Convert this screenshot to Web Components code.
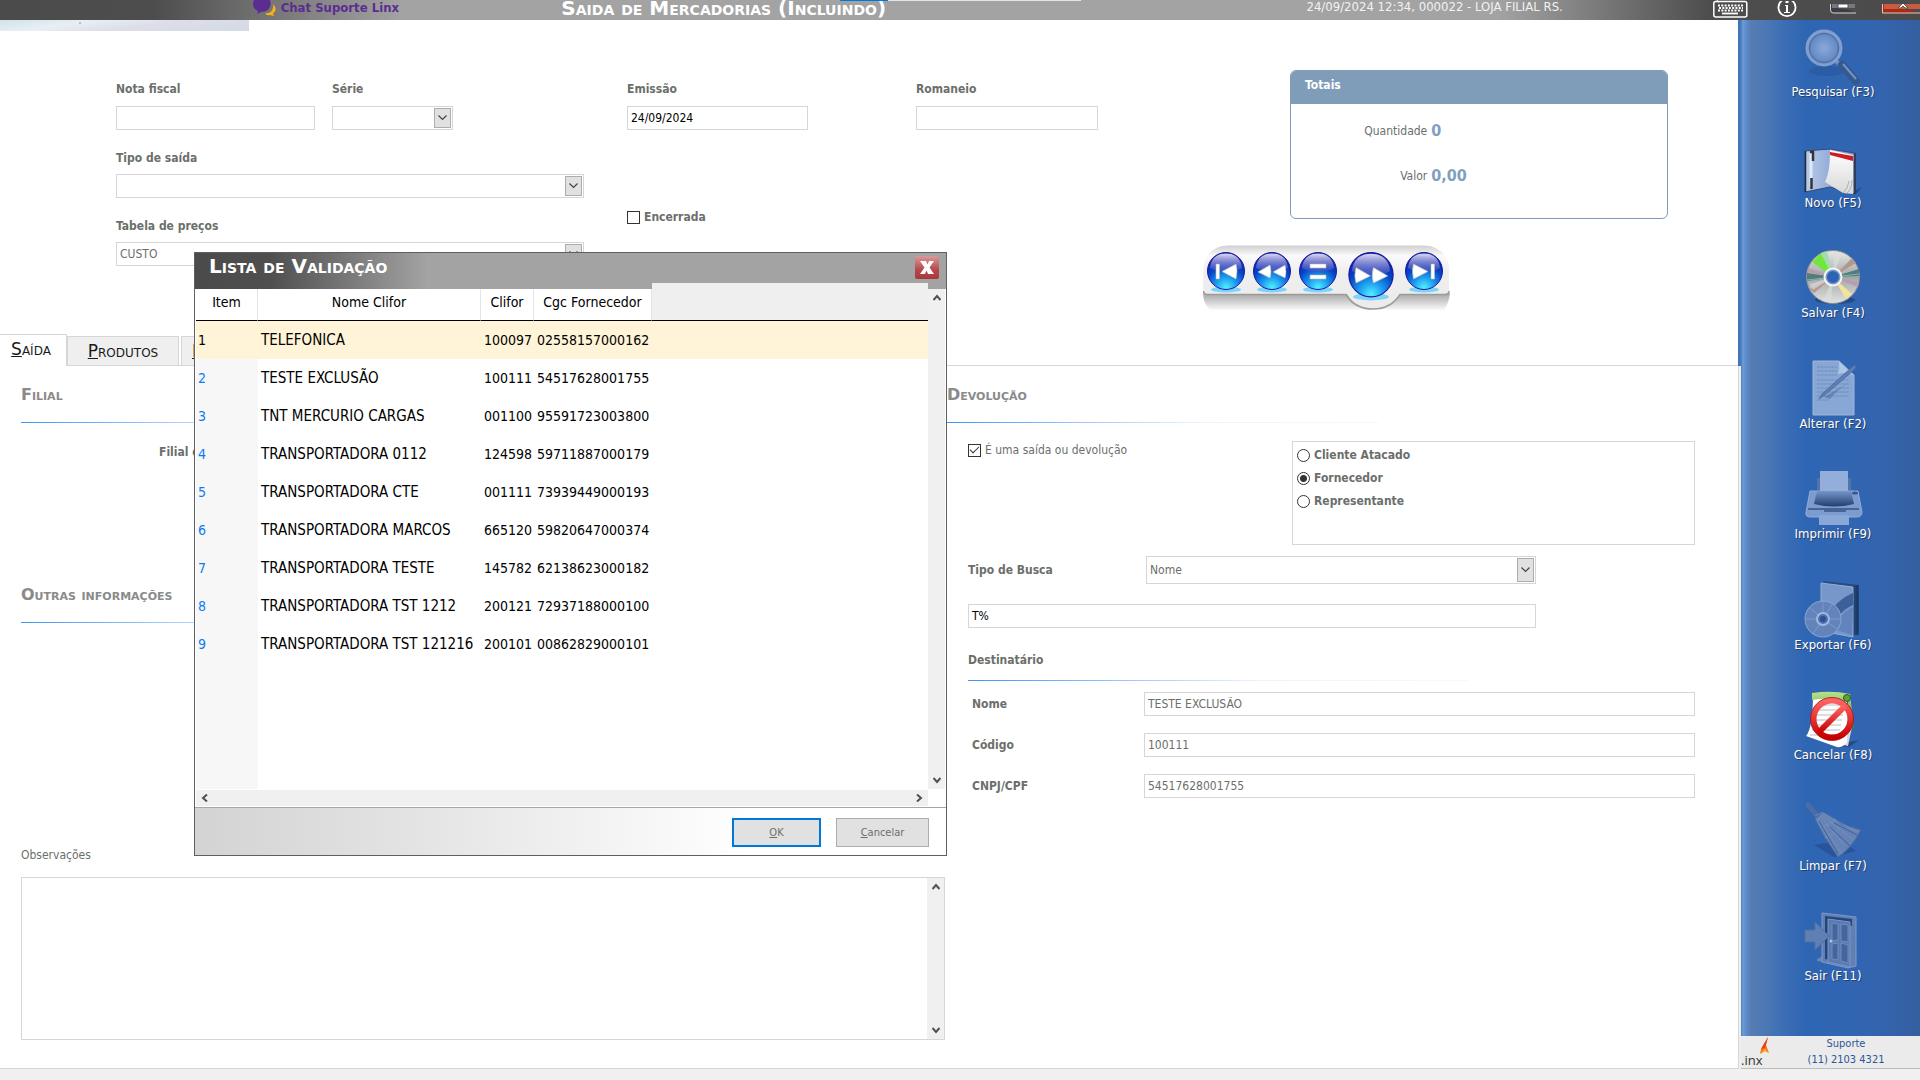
<!DOCTYPE html>
<html lang="pt-BR">
<head>
<meta charset="utf-8">
<title>Saida de Mercadorias</title>
<style>
  html, body { margin: 0; min-height: 100vh; background: #fff; }
  body {
    --ui: "DejaVu Sans Condensed", "DejaVu Sans", sans-serif;
    --display: "DejaVu Sans", sans-serif;
    --label: #6b6f6b;
    --line: #d6d6d6;
    font: 12px/18px var(--ui);
    color: var(--label);
  }
</style>
</head>
<body>
<saida-app></saida-app>

<script>
const base = `*{box-sizing:border-box} :host{display:block} button,input,select,textarea{font:inherit;color:inherit;margin:0}
button{padding:0;border:0;background:none}`;
function define(name, css, html) {
  customElements.define(name, class extends HTMLElement {
    constructor() {
      super();
      const t = document.createElement('template');
      t.innerHTML = `<style>${base}${css}</style>${typeof html === 'function' ? html(this) : html}`;
      this.attachShadow({ mode: 'open' }).append(t.content.cloneNode(true));
    }
  });
}
const attr = (el, n, d = '') => el.getAttribute(n) ?? d;

/* Title bar */
define('title-bar', `
  :host{height:20px;overflow:hidden;position:relative;color:#fff;
    background:linear-gradient(90deg,#4b4b4b 0,#4d4d4d 8%,#a3a3a3 21%,#a3a3a3 78%,#4d4d4d 89%,#4b4b4b)}
  .bar{display:grid;grid-template-columns:253fr 309fr 746fr 407fr 205fr;height:20px;align-items:start}
  .chat{grid-column:2;display:flex;gap:5px;color:#5c2d91;font-weight:bold;font-size:13px;line-height:16px;text-decoration:none;white-space:nowrap}
  h1{margin:0;font:20px/17px var(--display);font-variant:small-caps;font-weight:bold;white-space:nowrap}
  .info{font-size:13px;line-height:14px;color:#f2f2f2;white-space:nowrap}
  .btns{display:flex;align-items:flex-start}
  .btns button{height:18px} svg{display:block}
  .i{margin-left:29px}.min{margin-left:33px}.x{margin-left:26px}
  .load{position:absolute;top:0;left:43.75%;width:241px;height:1px;background:linear-gradient(90deg,#0078d7 48px,#e6e6e6 48px)}
`, `
  <div class="bar">
    <a class="chat" href="#"><svg width="23" height="17" viewBox="0 0 23 17"><path d="M13 13c5 1 8-4 7-9 4 4 3 8 0 9l1 3-4-1c-3 1-5-1-4-2z" fill="#fbb01a"/><path d="M1 0h16c2 6-1 12-9 12l-4 2 1-3C0 9-1 4 1 0z" fill="#5c2d91"/></svg><span>Chat Suporte Linx</span></a>
    <h1>Saida de Mercadorias (Incluindo)</h1>
    <span class="info">24/09/2024 12:34, 000022 - LOJA FILIAL RS.</span>
    <div class="btns">
      <button aria-label="Teclado"><svg width="35" height="18" viewBox="0 0 35 18" fill="none" stroke="#fff"><path d="M4 0c1 2 0 2 2 2" /><rect x=".8" y="1.500" width="33" height="15.500" rx="2" stroke-width="1.500"/><path d="M5 5.500h25M6 8h24M5 10.500h25" stroke-width="1.800" stroke-dasharray="2 1.300"/><path d="M9 13.500h16" stroke-width="1.800"/></svg></button>
      <button class="i" aria-label="Informações"><svg width="20" height="17" viewBox="0 0 20 17"><circle cx="10" cy="6.500" r="8.600" fill="none" stroke="#fff" stroke-width="1.800"/><path d="M8 4h3v7h2v1H7v-1h2V5H8zM8.500 0h3v2h-3z" fill="#fff"/></svg></button>
      <button class="min" aria-label="Minimizar"><svg width="26" height="10" viewBox="0 0 26 10"><path d="M.5 0v6q0 3 3 3H26" fill="#3c3c46" stroke="#d5d5d5"/><path d="M2 0h23v4H2z" fill="#77777f"/><path d="M8 0h10v4H8z" fill="#fff" stroke="#555"/></svg></button>
      <button class="x" aria-label="Fechar"><svg width="38" height="10" viewBox="0 0 38 10"><path d="M.5 0v9H38" fill="#a82a10" stroke="#e6c5bd"/><path d="M2 0h36v5H2z" fill="#c95a43"/><path d="m16 4 5-5 5 5h-3l-2-2-2 2z" fill="#fff" stroke="#555"/></svg></button>
    </div>
  </div>
  <span class="load"></span>
`);

/* Text field with the label above or at the left */
const fieldCss = `
  :host([side]){display:grid;grid-template-columns:var(--side,172fr 551fr);align-items:center}
  label{display:block;font-weight:bold;line-height:18px;margin-bottom:var(--gap,8px);white-space:nowrap}
  :host([side]) label{margin:0}
  input,select{width:100%;height:24px;border:1px solid var(--line);border-radius:0;background:#fff;padding:0 3px;outline:0;display:block}
  :host([dark]) input{color:#000}
  :host([side]) input,:host([side]) select{height:var(--h,24px)}`;
define('text-field', fieldCss, el => `
  ${el.hasAttribute('label') ? `<label for="f">${attr(el,'label')}</label>` : ''}
  <input id="f" type="text" value="${attr(el,'value')}" ${el.hasAttribute('label') ? '' : `aria-label="${attr(el,'name')}"`}>`);
define('select-field', fieldCss + `
  select{appearance:none;grid-area:1/1}
  .box{display:grid}
  .arrow{grid-area:1/1;justify-self:end;margin:2px;width:17px;border:1px solid #adadad;background:#e1e1e1;display:grid;place-items:center;pointer-events:none}
  svg{display:block}`, el => `
  <label for="f">${attr(el,'label')}</label>
  <div class="box"><select id="f"><option>${attr(el,'value')}</option></select>
  <span class="arrow"><svg width="9" height="6" viewBox="0 0 9 6"><path d="m.5.5 4 4 4-4" fill="none" stroke="#444" stroke-width="1.200"/></svg></span></div>`);

/* Tick boxes and radios */
define('check-box', `
  label{display:flex;align-items:center;gap:4px;line-height:18px;white-space:nowrap}
  :host([strong]) label{font-weight:bold}
  input{appearance:none;width:13px;height:13px;border:1px solid #333;background:#fff;display:grid;place-items:center}
  input:checked::after{content:"";width:8px;height:4px;margin-top:-3px;border:solid #333;border-width:0 0 1px 1px;rotate:-45deg}
`, el => `<label><input type="checkbox" ${el.hasAttribute('checked') ? 'checked' : ''}><slot></slot></label>`);
define('client-kind', `
  fieldset{margin:0;min-width:0;border:1px solid var(--line);height:104px;padding:4px;display:flex;flex-direction:column;gap:5px}
  label{display:flex;align-items:center;gap:4px;font-weight:bold;line-height:18px}
  input{appearance:none;width:13px;height:13px;border:1px solid #333;border-radius:50%;background:#fff}
  input:checked{background:radial-gradient(circle,#333 3px,#fff 4px)}
`, `<fieldset aria-label="Destino">
  <label><input type="radio" name="k">Cliente Atacado</label>
  <label><input type="radio" name="k" checked>Fornecedor</label>
  <label><input type="radio" name="k">Representante</label></fieldset>`);

define('section-title', `
  h2{margin:0 0 18px;font:16px/18px var(--display);font-variant:small-caps;font-weight:bold;color:#8a8a8a;white-space:nowrap}
  :host([plain]) h2{font:bold 12px/18px var(--ui);color:var(--label);margin-bottom:11px}
  hr{margin:0;border:0;height:1px;max-width:var(--rule,432px);background:linear-gradient(90deg,#3f93f5,#b9d8ff 42%,#eaf3ff 58%,#f6faff)}
`, `<h2><slot></slot></h2><hr>`);

define('totals-panel', `
  :host{border:1px solid #7f9cb8;border-radius:6px;height:149px;overflow:hidden}
  h2{margin:0;background:#7f9cb8;color:#fff;font:bold 12px/18px var(--ui);padding:5px 14px 10px}
  dl{margin:0;padding-top:17px;display:grid;grid-template-columns:137fr 237fr;column-gap:4px;row-gap:25px;align-items:center}
  dt{text-align:right;line-height:20px}
  dd{margin:0;font-weight:bold;font-size:16px;line-height:20px;color:#7f9fc0}
`, `<h2>Totais</h2><dl><dt>Quantidade</dt><dd>0</dd><dt>Valor</dt><dd>0,00</dd></dl>`);

/* Record navigation */
const orb = (r, glyph) => `<svg width="${2*r}" height="${2*r+3}" viewBox="0 0 38 41">
  <defs><radialGradient id="a" cx=".5" cy=".95" r=".95"><stop offset="0" stop-color="#52f0ff"/><stop offset=".3" stop-color="#1c9cf0"/><stop offset=".6" stop-color="#0745c8"/><stop offset="1" stop-color="#10109a"/></radialGradient>
  <linearGradient id="b" x2="0" y2="1"><stop offset="0" stop-color="#dcdcf4"/><stop offset="1" stop-color="#5050b8" stop-opacity=".5"/></linearGradient></defs>
  <ellipse cx="19" cy="37.500" rx="15" ry="3" fill="#7fd3f8"/><circle cx="19" cy="19" r="18.500" fill="url(#a)" stroke="#1a1aa4"/>
  <path d="M3 16C4 6 10 1.500 19 1.500S34 6 35 16c-8 5-23 5-32 0z" fill="url(#b)"/><g fill="#fff" stroke="#bbb" stroke-width=".6" stroke-linejoin="round">${glyph}</g></svg>`;
define('record-nav', `
  :host{display:grid;width:247px;height:65px}
  .bg,.row{grid-area:1/1}
  .row{display:flex;align-items:flex-start;gap:8px;padding:7px 0 0 4px}
  button{flex:none}.big{margin:0 3px} svg{display:block}
`, `
  <svg class="bg" width="247" height="65" viewBox="0 0 247 65"><defs>
    <linearGradient id="m" x2="0" y2="1"><stop offset="0" stop-color="#cfcfcf"/><stop offset=".16" stop-color="#fafafa"/><stop offset=".4" stop-color="#efefef"/><stop offset="1" stop-color="#ebebeb"/></linearGradient>
    <linearGradient id="s" x2="0" y2="1"><stop offset="0" stop-color="#a4a4a4"/><stop offset="1" stop-color="#fafafa"/></linearGradient></defs>
    <path d="M0 48h247q-1 10-6 17H7Q0 58 0 48z" fill="url(#s)"/>
    <path d="M.5 20Q5 1 25 .5h196q20 .5 25 20V46q0 3-4 3h-44c-6 8-13 15-27 15s-22-7-27-15L4 50q-4 0-4-3z" fill="url(#m)"/>
    <path d="M.5 46q0 3.500 4 3.500H143c6 10 15 14.500 27 14.500s21-5 27-14.500h45q4 0 4-3.500" fill="none" stroke="#9b9b9b" stroke-width="1.500"/></svg>
  <div class="row">
    <button aria-label="Primeiro">${orb(19,'<path d="M9 12h3.500v15H9zM15 19.500 29 12q2 7 0 15z"/>')}</button>
    <button aria-label="Anterior">${orb(19,'<path d="m5 20 12-7q2 7 0 13zM20 20l12-7q2 7 0 13z"/>')}</button>
    <button aria-label="Lista">${orb(19,'<path d="M11 12h16v4H11zM11 23h16v4H11z"/>')}</button>
    <button class="big" aria-label="Próximo">${orb(23,'<path d="m33 20-12-7q-2 7 0 13zM18.500 20l-12-7q-2 7 0 13z"/>')}</button>
    <button aria-label="Último">${orb(19,'<path d="M26 12h3.500v15H26zM23 19.500 8.500 12q-2 7 0 15z"/>')}</button>
  </div>`);

/* Upper form */
define('invoice-form', `
  :host{height:314px}
  .banner{width:249px;height:11px;background:radial-gradient(circle,#b9bfcf 1px,#0000 1px) 76px 0/8px 6px no-repeat,linear-gradient(172deg,#cfe3ea 0,#e8eff3 30%,#dcdfe9 55%,#d5d9e4)}
  .grid{display:grid;grid-template-columns:116fr 199fr 17fr 121fr 174fr 181fr 108fr 182fr 105fr 87fr 378fr 72fr}
  .left{grid-column:2/5;padding-top:49px;display:flex;flex-direction:column}
  .top{display:grid;grid-template-columns:199fr 17fr 121fr}
  .top select-field{grid-column:3}
  .wide{width:468px;margin-top:19px;--gap:7px}
  .mid{grid-column:6;padding-top:49px} check-box{margin-top:78px}
  .rom{grid-column:8;padding-top:49px}
  .right{grid-column:10/12;padding-top:39px}
  totals-panel{margin-left:87px} record-nav{margin-top:26px}
`, `
  <div class="banner"></div>
  <div class="grid">
    <div class="left">
      <div class="top"><text-field label="Nota fiscal"></text-field><select-field label="Série"></select-field></div>
      <select-field class="wide" label="Tipo de saída"></select-field>
      <select-field class="wide" label="Tabela de preços" value="CUSTO"></select-field>
    </div>
    <div class="mid"><text-field dark label="Emissão" value="24/09/2024"></text-field><check-box strong>Encerrada</check-box></div>
    <text-field class="rom" label="Romaneio"></text-field>
    <div class="right"><totals-panel></totals-panel><record-nav></record-nav></div>
  </div>`);

define('tab-strip', `
  nav{display:flex;align-items:flex-end;height:32px;border-bottom:1px solid var(--line)}
  button{font:17px/20px var(--display);font-variant:small-caps;color:#1a1a1a;background:#efefef;border:1px solid var(--line);border-bottom:0;height:29px;min-width:112px;padding:0 10px;white-space:nowrap;margin-right:2px;text-align:center}
  .on{background:#fff;height:32px;min-width:68px;margin:0 0 -1px -1px;padding:0 8px 4px 4px;margin-right:0}
  .last{text-align:left}
`, `<nav role="tablist"><button class="on" role="tab"><u>S</u>aída</button><button role="tab"><u>P</u>rodutos</button><button class="last" role="tab"><u>I</u></button></nav>`);

const chevron = d => `<svg width="8" height="8" viewBox="0 0 8 8"><path d="${d}" fill="none" stroke="#505050" stroke-width="2"/></svg>`;
const up = chevron('m.5 6 3.500-4 3.500 4'), down = chevron('m.5 2 3.500 4 3.500-4'), lft = chevron('M6 .5 2 4l4 3.500'), rgt = chevron('m2 .5 4 3.500-4 3.500');
define('scroll-rail', `
  :host{background:#f0f0f0;display:flex;flex-direction:column;justify-content:space-between;align-items:center;width:17px;padding:5px 0}
  :host([flat]){flex-direction:row;width:auto;height:16px;padding:0 5px} svg{display:block}
`, el => el.hasAttribute('flat') ? lft + rgt : up + down);

define('saida-tab', `
  :host{display:grid;grid-template-columns:947fr 791fr;border-right:1px solid var(--line);border-bottom:1px solid var(--line);height:703px;margin-right:1px;position:relative;z-index:1;box-shadow:2px 0 #efefef}
  .l{padding:20px 2px 0 21px}
  .a{height:200px}.b{height:260px}
  .filial{font-weight:bold;padding:20px 0 0 138px}
  .obs{display:block;margin-bottom:13px}
  .memo{display:flex;height:163px;border:1px solid var(--line)}
  textarea{flex:1;border:0;resize:none;outline:0;min-width:0}
  .r{padding:20px 43px 0 0}
  .body{padding-left:21px}
  .row{display:grid;grid-template-columns:324fr 403fr;margin-top:18px;align-items:start}
  .search{margin:11px 159px 0 0;--side:178fr 390fr;--h:28px}
  .q{margin:20px 159px 23px 0}
  .dest{display:flex;flex-direction:column;gap:17px;margin:11px 0 0 4px}
`, `
  <div class="l">
    <div class="a"><section-title>Filial</section-title><div class="filial">Filial de</div></div>
    <div class="b"><section-title>Outras informações</section-title></div>
    <label class="obs" for="obs">Observações</label>
    <div class="memo"><textarea id="obs"></textarea><scroll-rail></scroll-rail></div>
  </div>
  <div class="r">
    <section-title>Devolução</section-title>
    <div class="body">
      <div class="row"><check-box checked>É uma saída ou devolução</check-box><client-kind></client-kind></div>
      <select-field class="search" side label="Tipo de Busca" value="Nome"></select-field>
      <text-field class="q" dark name="Busca" value="T%"></text-field>
      <section-title plain style="--rule:500px">Destinatário</section-title>
      <div class="dest">
        <text-field side label="Nome" value="TESTE EXCLUSÃO"></text-field>
        <text-field side label="Código" value="100111"></text-field>
        <text-field side label="CNPJ/CPF" value="54517628001755"></text-field>
      </div>
    </div>
  </div>`);

/* Sidebar */
const icons = {
find:`<defs><radialGradient id="g"><stop offset="0" stop-color="#8aa9d8"/><stop offset="1" stop-color="#5b83bf"/></radialGradient></defs><ellipse cx="22" cy="43" rx="18" ry="5" fill="#2a559b" opacity=".6"/><path d="m31 33 6 6" stroke="#6d8fc2" stroke-width="4"/><path d="m37 37 14 16" stroke="#35598f" stroke-width="8" stroke-linecap="round"/><path d="m38 36 13 15" stroke="#7593c2" stroke-width="2"/><circle cx="19" cy="20" r="17" fill="url(#g)" stroke="#829fcc" stroke-width="3"/><circle cx="19" cy="20" r="14.500" fill="none" stroke="#46699f"/>`,
novo:`<defs><linearGradient id="g"><stop offset="0" stop-color="#b9cbea"/><stop offset="1" stop-color="#6e8fc6"/></linearGradient><linearGradient id="p" x2="0" y2="1"><stop offset="0" stop-color="#fff"/><stop offset="1" stop-color="#d8d8d8"/></linearGradient></defs><path d="m45 54 12-6-6 7z" fill="#234a88"/><path d="m0 12 25-2 25 4v41l-25-7-25 5z" fill="url(#g)" stroke="#36496e"/><path d="M.5 12v41" stroke="#222c44" stroke-width="1.500"/><path d="m25 11 23 5v39l-10-1-18-11q5-10 5-29z" fill="url(#p)"/><path d="M50 14v41" stroke="#333c55" stroke-width="2"/><path d="m25 13 23 4v5l-23-6z" fill="#cc1d24"/><path d="M42 54q5-4 5-13M38 54q5-4 6-12" stroke="#999" fill="none" stroke-width=".7"/><path d="M6 14v34" stroke="#e1e8f7" stroke-width="3"/><path d="M5 13h3v9M6.500 39v11" stroke="#333" stroke-width="2.500" fill="none"/>`,
disc:`<defs><linearGradient id="g" x2="0" y2="1"><stop offset="0" stop-color="#e8e8e8"/><stop offset=".5" stop-color="#a2a7a7"/><stop offset="1" stop-color="#e1e1e1"/></linearGradient></defs><ellipse cx="30" cy="51" rx="20" ry="4" fill="#234a88"/><circle cx="28" cy="28" r="26.500" fill="url(#g)" stroke="#8f8f8f"/><path d="M28 28 7 13l9-9z" fill="#73e63a"/><path d="M28 28 16 4l6-2z" fill="#a0ddb0"/><path d="M28 28 2 24v8zM28 28l26-8v7z" fill="#577b79"/><path d="M28 28 3 19l-1 4zM28 28l25 10 1-5z" fill="#b99dae"/><path d="M28 28 5 40l4 4zM28 28 47 9l4 5z" fill="#b2998f"/><path d="m28 28 13 22 6-5z" fill="#f3e29c"/><path d="M28 28 2 31M28 28l26-3" stroke="#72bcbc"/><path d="M28 28 5 35l3 6M28 28l9-24-8-2zM28 28 18 52l8 2z" fill="#ddd" opacity=".6"/><circle cx="28" cy="28" r="8.500" fill="#7f9bc8" stroke="#f5f5f5" stroke-width="2"/><circle cx="28" cy="28" r="6" fill="#2d63b5"/>`,
edit:`<path d="M8 1h26l15 14v40H8z" fill="#89a7d5" stroke="#9db6dd"/><path d="M34 1q1 7-1 13 9-3 16 2z" fill="#b1c5e5"/><path d="M12 7h20M12 11h20M12 15h20M12 20h32M12 24h32M12 28h32M12 32h32M12 36h32M12 40h12" stroke="#6e8dbf" stroke-width="1.200" stroke-dasharray="3 .6"/><path d="m19 37 26-15q-11 6-20 17z" fill="#4f71a9" opacity=".6"/><path d="m14 39 3-5L47 7l3-2 1 2-2 3-29 25z" fill="#5e7db2" stroke="#45659a" stroke-width=".7"/>`,
print:`<defs><linearGradient id="g" x2="0" y2="1"><stop offset="0" stop-color="#7695c9"/><stop offset="1" stop-color="#233f70"/></linearGradient></defs><path d="M12 8h34v17H12z" fill="#5473a8"/><path d="M15 1h28v25H15z" fill="#93aedb"/><path d="M5 21h48l4 21q0 5-5 5H5q-5 0-4-5z" fill="#7c9bce" stroke="#90abda"/><path d="M12 21h34l3 13q-20 5-40 0z" fill="url(#g)"/><path d="M3 39h51M19 41h22" stroke="#466597" stroke-width="2"/><path d="M14 45h30v10H14z" fill="#8aa8d7"/><ellipse cx="50" cy="23" rx="3" ry="1.500" fill="#35588f"/>`,
exp:`<path d="m18 0 36 4v48l-8 4z" fill="#284b82"/><path d="M52 4v50M48 5v49" stroke="#1d3b69" stroke-width="3"/><path d="m16 2 32 4v50l-32-6z" fill="#7797cb" stroke="#93add9"/><path d="M48 12Q24 22 18 50l10 2q2-20 20-28z" fill="#3c6098"/><path d="M48 26Q35 32 28 48l19 6z" fill="#6284bd"/><circle cx="18" cy="38" r="18" fill="#6284bb" stroke="#8ba7d5"/><path d="M18 38 4 26M18 38 28 22M18 38l14 10M18 38 8 53M18 38V19M18 38H1M18 38h17" stroke="#88a4d2" opacity=".7"/><circle cx="18" cy="38" r="6" fill="#4e72ad" stroke="#a2b9df" stroke-width="2"/><circle cx="18" cy="38" r="3" fill="#2b5295"/>`,
cancel:`<defs><linearGradient id="g" x2="0" y2="1"><stop offset="0" stop-color="#b8e28a"/><stop offset="1" stop-color="#3f8f25"/></linearGradient><linearGradient id="r" x2="0" y2="1"><stop offset="0" stop-color="#ff6464"/><stop offset="1" stop-color="#c80000"/></linearGradient></defs><path d="m30 54 24-5-10 7z" fill="#234a88"/><path d="M45 5 47 36l-4 19-8-2z" fill="#d9d9d9"/><path d="M8 3h34v48q-4 6-10 5L1 45q7-8 7-42z" fill="#fff"/><path d="M11 14h28M11 19h28M10 24h28M9 29h28M8 34h28M7 39h28M5 44h26" stroke="#bbb"/><path d="M7 2q20-3 38 1l4 34-4-1-2-26Q24 6 7 9z" fill="url(#g)"/><circle cx="42" cy="7" r="3.500" fill="#5fa13b" stroke="#285d18"/><circle cx="27" cy="28" r="18.500" fill="none" stroke="url(#r)" stroke-width="6"/><path d="m14 41 26-26" stroke="url(#r)" stroke-width="6"/><circle cx="27" cy="28" r="21.500" fill="none" stroke="#9e1111" stroke-width=".8"/>`,
clean:`<path d="m9 43 20 12 22-6-15-10z" fill="#28549b"/><path d="m3 3 12 14" stroke="#4c6ca3" stroke-width="5" stroke-linecap="round"/><path d="m10 17 8-7 12 7 6 5 20 6q-10 19-23 27L19 34q-4-8-9-17z" fill="#6583b6" stroke="#4c6ca2"/><path d="m13 16 24 36M15 14l25 30M17 13l32 25M19 12l34 18M12 18l21 34M10 14l8-4M16 25q7-1 15-8M20 36q9-3 17-12" stroke="#7690bd" stroke-width=".8" fill="none"/><path d="m14 19 19 33M25 25l20 19M29 21l23 12" stroke="#3e5f97"/>`,
exit:`<path d="m12 47 8-4 32 3-8 10-32-7z" fill="#6684b6"/><path d="m17 1 34 4v49l-8 2-26-6z" fill="#6080b4" stroke="#7e99c8"/><path d="m20 4 27 3v7l-22-4v38l-5-1z" fill="#244579"/><path d="m23 7 22 3v45l-22-5z" fill="#5b7bb0" stroke="#7a95c5"/><path d="m27 11 6 1v16l-6 1zM36 12l7 1v17l-7-1zM27 32l6-1v17l-6-1zM36 31l7 2v18l-7-2z" fill="#44669d" stroke="#6e8cbe"/><path d="M0 18h10v-8l14 14-14 14v-8H0z" fill="#6080b3" stroke="#4e70a8"/><circle cx="26" cy="29" r="1.500" fill="#afc0df"/>`};
define('tool-button', `
  button{display:flex;flex-direction:column;align-items:center;width:100%;padding-top:8px;color:#fff;line-height:16px;font-size:13px}
  svg{display:block;overflow:visible}
  span{text-shadow:1px 1px 0 #2a3f66}
`, el => `<button><svg width="56" height="56" viewBox="0 0 56 56" fill="none">${icons[attr(el,'icon')]}</svg><span><slot></slot></span></button>`);

define('tool-sidebar', `
  :host{display:flex;flex-direction:column;background:#f0f0f0}
  .tools{flex:1;display:grid;grid-template-rows:repeat(9,1fr);padding:0 0 21px 8px;
    background:linear-gradient(90deg,#3f6fb3 0,#4a7dc0 3px,#6e9ed6 5px,#5b8ccc 8px,#577cb4 13px,#4a77b4 29px,#3b6cb4 48px,#2e66b3 68px,#3165b2 113px,#3364ae 143px,#345f9f)}
  .support{height:33px;background:#ebebeb;border-bottom:1px solid #bdbdbd;display:flex;color:#2b5797;padding-left:3px}
  .logo{width:31px;height:32px}
  address{flex:1;font-style:normal;text-align:center;font-size:11px;line-height:16px}
`, `
  <div class="tools">
    <tool-button icon="find">Pesquisar (F3)</tool-button><tool-button icon="novo">Novo (F5)</tool-button><tool-button icon="disc">Salvar (F4)</tool-button>
    <tool-button icon="edit">Alterar (F2)</tool-button><tool-button icon="print">Imprimir (F9)</tool-button><tool-button icon="exp">Exportar (F6)</tool-button>
    <tool-button icon="cancel">Cancelar (F8)</tool-button><tool-button icon="clean">Limpar (F7)</tool-button><tool-button icon="exit">Sair (F11)</tool-button>
  </div>
  <div class="support"><svg class="logo" viewBox="0 0 31 32"><text x="0" y="29" font-family="Open Sans, sans-serif" font-size="13" fill="#333">.inx</text><path d="m27 1-7 12-1 5 5-3 4 2-3-8z" fill="#f47b20"/><path d="m27 1-7 12 4-1z" fill="#e43d26"/><path d="m19 18 5-3 4 2-4-4z" fill="#fbb01a"/></svg>
  <address>Suporte<br>(11) 2103 4321</address></div>`);

/* Validation list window */
const rows = [['TELEFONICA','100097','02558157000162'],['TESTE EXCLUSÃO','100111','54517628001755'],['TNT MERCURIO CARGAS','001100','95591723003800'],['TRANSPORTADORA 0112','124598','59711887000179'],['TRANSPORTADORA CTE','001111','73939449000193'],['TRANSPORTADORA MARCOS','665120','59820647000374'],['TRANSPORTADORA TESTE','145782','62138623000182'],['TRANSPORTADORA TST 1212','200121','72937188000100'],['TRANSPORTADORA TST 121216','200101','00862829000101']];
define('list-window', `
  :host{position:absolute;z-index:2;left:194px;top:252px;width:753px;border:1px solid #5f5f5f;background:#fff;color:#000}
  header{height:36px;display:flex;justify-content:space-between;align-items:flex-start;padding:3px 7px 0 14px;background:linear-gradient(90deg,#4b4b4b 0,#4f4f4f 10%,#a3a3a3 31%)}
  h2{margin:0;color:#fff;font:20px/20px var(--display);font-variant:small-caps;font-weight:bold;white-space:nowrap}
  .close{width:24px;height:23px;border-radius:2px;background:linear-gradient(#d99a9a,#b5484c 60%,#a8383c)} svg{display:block}
  .pane{display:grid;grid-template-columns:1fr 17px;grid-template-rows:500px 16px;row-gap:1px;padding:0 1px 1px;border-bottom:1px solid #a5a5a5}
  table{border-collapse:separate;border-spacing:0;table-layout:fixed;width:100%;font-size:14px}
  .list{background:linear-gradient(90deg,#f7f7f7 62px,#fff 62px)}
  th{height:32px;padding:0 0 6px;font-weight:normal;line-height:18px;background:#fff;border-right:1px solid #e4e4e4;border-bottom:1px solid #000;white-space:nowrap}
  th:last-child{background:#efefef;box-shadow:0 -6px #efefef;border-right:0}
  td{height:38px;padding:0 0 0 3px;white-space:nowrap;line-height:18px}
  td:first-child{color:#0a7cf0;padding-left:2px}
  td:nth-child(2){font-size:15px}
  tr.sel td{background:#fff4d8;color:#000}
  footer{height:47px;display:flex;justify-content:flex-end;align-items:flex-start;gap:15px;padding:10px 17px 0 0;background:linear-gradient(90deg,#d3d3d3,#e4e4e4 30%,#fff 74%)}
  footer button{width:93px;height:29px;background:#e1e1e1;border:1px solid #adadad;color:#6b6f6b;font-size:11px}
  footer .ok{width:89px;border:2px solid #0078d7}
`, `
  <header><h2>Lista de Validação</h2><button class="close" aria-label="Fechar"><svg width="24" height="23" viewBox="0 0 24 23"><path d="M5 5h6l1.500 3.500L14 5h5l-4.500 6.500L19 18h-6l-1.500-3.500L10 18H5l4.500-6.500z" fill="#fff"/></svg></button></header>
  <div class="pane">
    <div class="list"><table><colgroup><col style="width:62px"><col style="width:223px"><col style="width:53px"><col style="width:118px"><col></colgroup>
      <thead><tr><th>Item</th><th>Nome Clifor</th><th>Clifor</th><th>Cgc Fornecedor</th><th></th></tr></thead>
      <tbody>${rows.map((r,i)=>`<tr${i?'':' class="sel"'}><td>${i+1}</td><td>${r[0]}</td><td>${r[1]}</td><td>${r[2]}</td><td></td></tr>`).join('')}</tbody></table></div>
    <scroll-rail></scroll-rail><scroll-rail flat></scroll-rail>
  </div>
  <footer><button class="ok"><u>O</u>K</button><button><u>C</u>ancelar</button></footer>`);

define('saida-app', `
  :host{min-height:100vh;background:#f0f0f0;position:relative}
  .work{display:grid;grid-template-columns:1740fr 180fr}
  main{background:#fff;min-width:0} tool-sidebar{margin-left:-2px}
`, `
  <title-bar></title-bar>
  <div class="work"><main><invoice-form></invoice-form><tab-strip></tab-strip><saida-tab></saida-tab></main><tool-sidebar></tool-sidebar></div>
  <list-window></list-window>`);
</script>
</body>
</html>
